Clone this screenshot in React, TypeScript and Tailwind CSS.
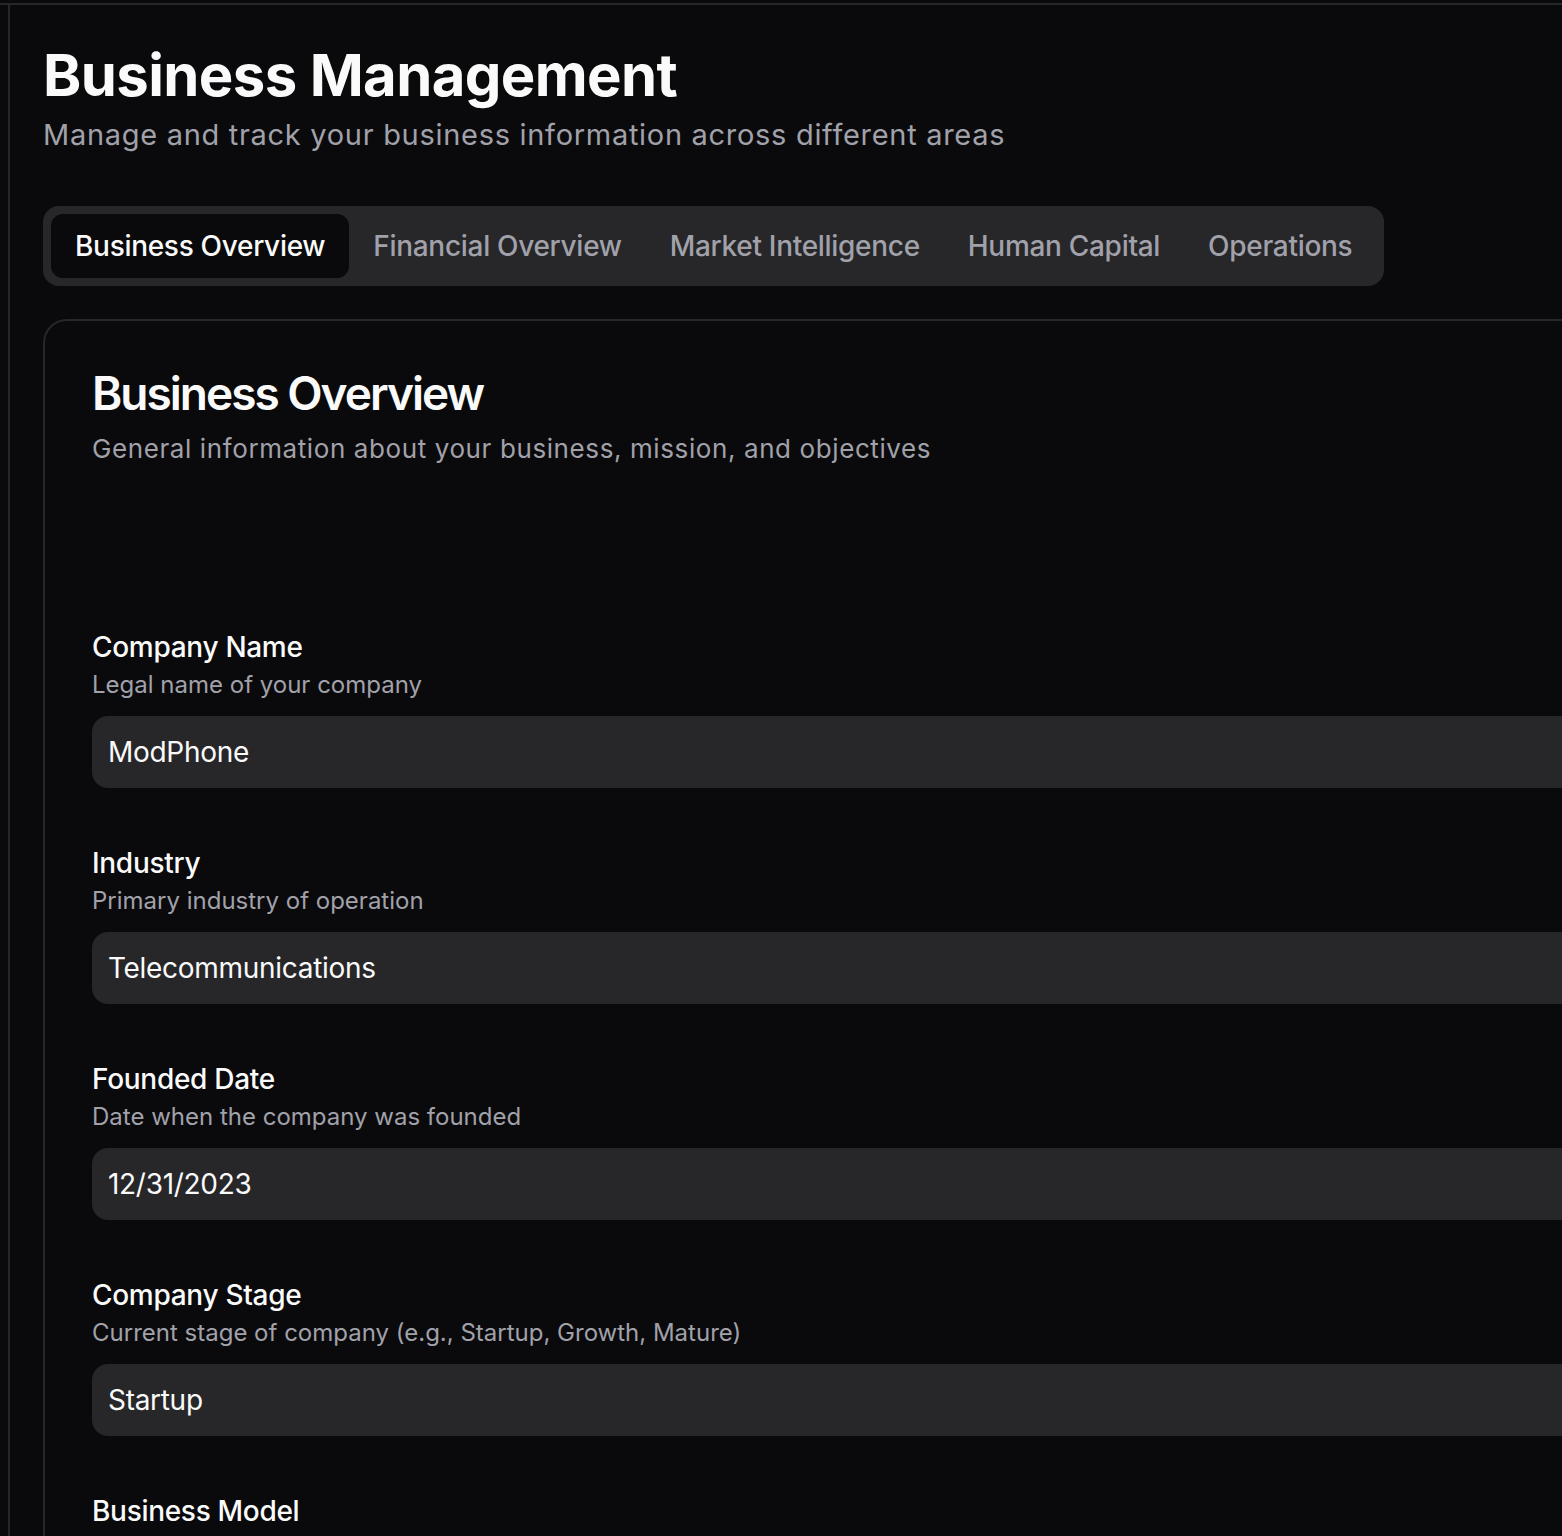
import { useState } from "react";

const tabs = [
  "Business Overview",
  "Financial Overview",
  "Market Intelligence",
  "Human Capital",
  "Operations",
];

const fields = [
  {
    label: "Company Name",
    description: "Legal name of your company",
    value: "ModPhone",
  },
  {
    label: "Industry",
    description: "Primary industry of operation",
    value: "Telecommunications",
  },
  {
    label: "Founded Date",
    description: "Date when the company was founded",
    value: "12/31/2023",
  },
  {
    label: "Company Stage",
    description: "Current stage of company (e.g., Startup, Growth, Mature)",
    value: "Startup",
  },
  {
    label: "Business Model",
    description: "How your company generates revenue",
    value: "Hardware sales",
  },
];

const App = () => {
  const [activeTab, setActiveTab] = useState("Business Overview");
  const [values, setValues] = useState<string[]>(fields.map((f) => f.value));

  return (
    <div className="h-[1536px] w-full overflow-hidden bg-[#0a0a0c] font-['Inter','Noto_Sans',sans-serif] text-[#fafafa]">
      <div className="h-[5px] border-b-2 border-[#27272a]" />
      <div className="flex min-h-[1531px]">
        <div className="w-[10px] shrink-0 border-r-2 border-[#27272a]" />
        <main className="w-[1760px] shrink-0 pl-[33px] pt-[34px]">
          <h1 className="text-[58px] font-bold leading-[72px] tracking-[-0.6px]">
            Business Management
          </h1>
          <p className="mt-[6px] text-[29px] leading-[36px] tracking-[0.7px] text-[#a1a1aa]">
            Manage and track your business information across different areas
          </p>

          <div className="mt-[53px] inline-flex h-[80px] items-center rounded-[16px] bg-[#27272a] p-[8px]">
            {tabs.map((tab) => (
              <button
                key={tab}
                onClick={() => setActiveTab(tab)}
                className={
                  activeTab === tab
                    ? "flex h-full items-center rounded-[12px] bg-[#0a0a0c] px-[24px] text-[28px] font-medium tracking-[-0.3px] text-[#fafafa]"
                    : "flex h-full items-center rounded-[12px] px-[24px] text-[28px] font-medium tracking-[-0.3px] text-[#a1a1aa]"
                }
              >
                {tab}
              </button>
            ))}
          </div>

          <div className="mt-[33px] rounded-[24px] border-2 border-[#27272a] bg-[#0a0a0c] px-[47px] pt-[48px]">
            <h2 className="text-[46px] font-semibold leading-[48px] tracking-[-2px]">
              Business Overview
            </h2>
            <p className="mt-[14px] text-[26px] leading-[36px] tracking-[0.6px] text-[#a1a1aa]">
              General information about your business, mission, and objectives
            </p>

            <div className="mt-[162px] flex flex-col gap-[57px]">
              {fields.map((field, i) => (
                <div key={field.label} className="flex flex-col">
                  <label className="text-[28px] font-medium leading-[36px] tracking-[-0.3px]">
                    {field.label}
                  </label>
                  <span className="mt-[4px] text-[24px] leading-[32px] text-[#a1a1aa]">
                    {field.description}
                  </span>
                  <input
                    value={values[i]}
                    onChange={(e) => {
                      const next = [...values];
                      next[i] = e.target.value;
                      setValues(next);
                    }}
                    className="mt-[15px] h-[72px] w-full rounded-[16px] bg-[#27272a] px-[16px] text-[28px] tracking-[-0.3px] text-[#fafafa] outline-none"
                  />
                </div>
              ))}
            </div>
          </div>
        </main>
      </div>
    </div>
  );
};

export default App;
